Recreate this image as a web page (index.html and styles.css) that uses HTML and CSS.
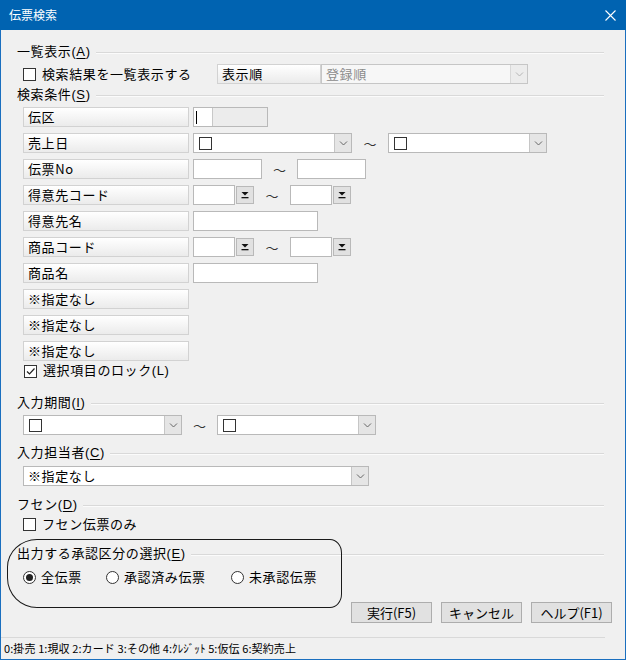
FILE: index.html
```html
<!DOCTYPE html>
<html lang="ja">
<head>
    <meta charset="UTF-8">
    <title>伝票検索</title>
    <link rel="stylesheet" href="styles.css">
</head>
<body>
    <div class="window">
        <div class="titlebar">
            <span class="title">伝票検索</span>
            <svg class="close" width="11" height="11" viewBox="0 0 11 11">
                <path d="M0.5 0.5 L10.5 10.5 M10.5 0.5 L0.5 10.5" stroke="#fff" stroke-width="1.1" fill="none"/>
            </svg>
        </div>

        <div class="content">
            <!-- 一覧表示 -->
            <div class="section-title">一覧表示(<u>A</u>)</div>
            <div class="row list-row">
                <label class="check"><span class="box"></span>検索結果を一覧表示する</label>
                <div class="field-label order-label">表示順</div>
                <div class="combo disabled order-combo">
                    <span class="combo-text">登録順</span>
                    <span class="combo-btn"><svg width="9" height="5" viewBox="0 0 9 5"><path d="M1 0.5 L4.5 4 L8 0.5" stroke="#b5b5b5" fill="none"/></svg></span>
                </div>
            </div>

            <!-- 検索条件 -->
            <div class="section-title cond-title">検索条件(<u>S</u>)</div>
            <div class="criteria">
                <div class="row">
                    <div class="field-label">伝区</div>
                    <div class="denku"><span class="denku-input"><span class="caret"></span></span><span class="denku-name"></span></div>
                </div>
                <div class="row">
                    <div class="field-label">売上日</div>
                    <div class="combo date-combo">
                        <span class="box inner"></span>
                        <span class="combo-text"></span>
                        <span class="combo-btn"><svg width="9" height="5" viewBox="0 0 9 5"><path d="M1 0.5 L4.5 4 L8 0.5" stroke="#666" fill="none"/></svg></span>
                    </div>
                    <span class="tilde">～</span>
                    <div class="combo date-combo">
                        <span class="box inner"></span>
                        <span class="combo-text"></span>
                        <span class="combo-btn"><svg width="9" height="5" viewBox="0 0 9 5"><path d="M1 0.5 L4.5 4 L8 0.5" stroke="#666" fill="none"/></svg></span>
                    </div>
                </div>
                <div class="row">
                    <div class="field-label">伝票No</div>
                    <div class="input no-input"></div>
                    <span class="tilde">～</span>
                    <div class="input no-input"></div>
                </div>
                <div class="row">
                    <div class="field-label">得意先コード</div>
                    <div class="input code-input"></div>
                    <span class="spin"><svg width="8" height="8" viewBox="0 0 8 8"><path d="M0.5 1 H7.5 L4 4.5 Z" fill="#111"/><rect x="0.5" y="6" width="7" height="1.3" fill="#111"/></svg></span>
                    <span class="tilde">～</span>
                    <div class="input code-input"></div>
                    <span class="spin"><svg width="8" height="8" viewBox="0 0 8 8"><path d="M0.5 1 H7.5 L4 4.5 Z" fill="#111"/><rect x="0.5" y="6" width="7" height="1.3" fill="#111"/></svg></span>
                </div>
                <div class="row">
                    <div class="field-label">得意先名</div>
                    <div class="input name-input"></div>
                </div>
                <div class="row">
                    <div class="field-label">商品コード</div>
                    <div class="input code-input"></div>
                    <span class="spin"><svg width="8" height="8" viewBox="0 0 8 8"><path d="M0.5 1 H7.5 L4 4.5 Z" fill="#111"/><rect x="0.5" y="6" width="7" height="1.3" fill="#111"/></svg></span>
                    <span class="tilde">～</span>
                    <div class="input code-input"></div>
                    <span class="spin"><svg width="8" height="8" viewBox="0 0 8 8"><path d="M0.5 1 H7.5 L4 4.5 Z" fill="#111"/><rect x="0.5" y="6" width="7" height="1.3" fill="#111"/></svg></span>
                </div>
                <div class="row">
                    <div class="field-label">商品名</div>
                    <div class="input name-input"></div>
                </div>
                <div class="row"><div class="field-label">※指定なし</div></div>
                <div class="row"><div class="field-label">※指定なし</div></div>
                <div class="row"><div class="field-label">※指定なし</div></div>
            </div>
            <label class="check lock-row"><span class="box checked"><svg width="11" height="11" viewBox="0 0 11 11"><path d="M2 5.5 L4.5 8 L9.5 2.5" stroke="#222" stroke-width="1.2" fill="none"/></svg></span>選択項目のロック(L)</label>

            <!-- 入力期間 -->
            <div class="section-title period-title">入力期間(<u>I</u>)</div>
            <div class="row period-row">
                <div class="combo period-combo">
                    <span class="box inner"></span>
                    <span class="combo-text"></span>
                    <span class="combo-btn"><svg width="9" height="5" viewBox="0 0 9 5"><path d="M1 0.5 L4.5 4 L8 0.5" stroke="#666" fill="none"/></svg></span>
                </div>
                <span class="tilde">～</span>
                <div class="combo period-combo">
                    <span class="box inner"></span>
                    <span class="combo-text"></span>
                    <span class="combo-btn"><svg width="9" height="5" viewBox="0 0 9 5"><path d="M1 0.5 L4.5 4 L8 0.5" stroke="#666" fill="none"/></svg></span>
                </div>
            </div>

            <!-- 入力担当者 -->
            <div class="section-title staff-title">入力担当者(<u>C</u>)</div>
            <div class="row staff-row">
                <div class="combo staff-combo">
                    <span class="combo-text">※指定なし</span>
                    <span class="combo-btn"><svg width="9" height="5" viewBox="0 0 9 5"><path d="M1 0.5 L4.5 4 L8 0.5" stroke="#666" fill="none"/></svg></span>
                </div>
            </div>

            <!-- フセン -->
            <div class="section-title fusen-title">フセン(<u>D</u>)</div>
            <label class="check fusen-row"><span class="box"></span>フセン伝票のみ</label>

            <!-- 承認区分 -->
            <div class="section-title approve-title">出力する承認区分の選択(<u>E</u>)</div>
            <div class="radios">
                <label class="radio"><span class="dot selected"></span>全伝票</label>
                <label class="radio"><span class="dot"></span>承認済み伝票</label>
                <label class="radio"><span class="dot"></span>未承認伝票</label>
            </div>

            <div class="actions">
                <button class="btn">実行(F5)</button>
                <button class="btn">キャンセル</button>
                <button class="btn">ヘルプ(F1)</button>
            </div>
        </div>

        <div class="statusbar">0:掛売 1:現収 2:カード 3:その他 4:ｸﾚｼﾞｯﾄ 5:仮伝 6:契約売上</div>

        <div class="annotation"></div>
    </div>
</body>
</html>
```

FILE: styles.css
```css
* {
    margin: 0;
    padding: 0;
    box-sizing: border-box;
}

body {
    background: #fff;
    font-family: "Noto Sans CJK JP", "Noto Sans", sans-serif;
    font-size: 13px;
    color: #000;
}

.window {
    position: relative;
    width: 626px;
    height: 660px;
    background: #f0f0f0;
    border: 1px solid #1a6fbf;
    border-top: none;
    display: flex;
    flex-direction: column;
}

.titlebar {
    height: 30px;
    background: #0063b1;
    display: flex;
    align-items: center;
    justify-content: space-between;
    padding: 0 10px 0 9px;
    margin: 0 -1px;
}

.title {
    color: #fff;
    font-size: 12px;
    line-height: 16px;
}

.close {
    display: block;
}

.content {
    flex: 1;
    padding: 13px 21px 0 16px;
}

/* group heading with etched line */
.section-title {
    display: flex;
    align-items: center;
    height: 18px;
    line-height: 18px;
    white-space: nowrap;
    letter-spacing: 0.6px;
    font-family: "Liberation Sans", "Noto Sans CJK JP", sans-serif;
}

.section-title::after {
    content: "";
    flex: 1;
    height: 1px;
    margin-left: 5px;
    background: #d9d9d9;
    box-shadow: 0 1px 0 #fbfbfb;
}

.section-title u {
    text-underline-offset: 2px;
}

.row {
    display: flex;
    align-items: center;
    height: 20px;
}

.list-row {
    margin: 3px 0 0 6px;
}

.cond-title { margin-top: 2px; }

.criteria {
    display: flex;
    flex-direction: column;
    gap: 6px;
    margin: 3px 0 0 6px;
}

/* checkbox and radio */
.check {
    display: flex;
    align-items: center;
    gap: 6px;
    height: 18px;
    line-height: 18px;
    letter-spacing: 0.6px;
}

.box {
    width: 13px;
    height: 13px;
    border: 1px solid #333;
    background: #fff;
    flex: none;
    display: flex;
    align-items: center;
    justify-content: center;
}

.list-row .check {
    width: 194px;
}

.lock-row {
    margin: 1px 0 0 7px;
    font-family: "Liberation Sans", "Noto Sans CJK JP", sans-serif;
}

.fusen-row {
    margin: 1px 0 0 6px;
}

.radios {
    display: flex;
    margin: 5px 0 0 6px;
    height: 18px;
}

.radio {
    display: flex;
    align-items: center;
    gap: 5px;
    line-height: 18px;
    letter-spacing: 0.6px;
}

.radio:nth-child(1) { width: 83px; }
.radio:nth-child(2) { width: 125px; }

.dot {
    width: 13px;
    height: 13px;
    border: 1px solid #333;
    border-radius: 50%;
    background: #fff;
    display: flex;
    align-items: center;
    justify-content: center;
}

.dot.selected::after {
    content: "";
    width: 7px;
    height: 7px;
    border-radius: 50%;
    background: #222;
}

/* labels and fields */
.field-label {
    width: 166px;
    height: 20px;
    margin-right: 4px;
    border: 1px solid #d2d2d2;
    background: linear-gradient(#ffffff, #f5f5f5 50%, #ebebeb);
    padding-left: 4px;
    line-height: 18px;
    letter-spacing: 0.6px;
}

.order-label {
    width: 104px;
    margin-right: 0;
}

.input {
    height: 20px;
    border: 1px solid #b9b9b9;
    background: #fff;
}

.no-input { width: 69px; }
.code-input { width: 42px; }
.name-input { width: 125px; }

.denku {
    display: flex;
    width: 75px;
    height: 20px;
    border: 1px solid #b9b9b9;
}

.denku-input {
    width: 19px;
    background: #fff;
    border-right: 1px solid #c8c8c8;
    padding: 3px 0 0 2px;
}

.caret {
    display: block;
    width: 1px;
    height: 13px;
    background: #000;
}

.denku-name {
    flex: 1;
    background: #ececec;
}

.spin {
    width: 18px;
    height: 18px;
    margin-left: 1px;
    border: 1px solid #b9b9b9;
    background: #e1e1e1;
    display: flex;
    align-items: center;
    justify-content: center;
}

.tilde {
    width: 36px;
    text-align: center;
    color: #333;
    font-size: 13px;
}

.no-input + .tilde { width: 35px; }

.combo {
    display: flex;
    align-items: center;
    height: 20px;
    border: 1px solid #b9b9b9;
    background: #fff;
}

.combo-text {
    flex: 1;
    padding-left: 4px;
    line-height: 18px;
    letter-spacing: 0.6px;
}

.combo-btn {
    width: 17px;
    height: 18px;
    background: #e5e5e5;
    border-left: 1px solid #c6c6c6;
    display: flex;
    align-items: center;
    justify-content: center;
}

.box.inner {
    margin-left: 5px;
}

.order-combo {
    width: 207px;
    background: #f7f7f7;
    border-color: #c6c6c6;
}

.order-combo .combo-text {
    color: #8c8c8c;
}

.order-combo .combo-btn {
    background: #ececec;
    border-left-color: #d8d8d8;
}

.date-combo { width: 159px; }

.period-title { margin-top: 14px; }

.period-row {
    margin: 3px 0 0 6px;
}

.period-combo { width: 159px; }
.period-row .tilde { width: 35px; }

.staff-title { margin-top: 9px; }

.staff-row {
    margin: 4px 0 0 6px;
}

.staff-combo { width: 346px; }

.fusen-title { margin-top: 10px; }

.approve-title { margin-top: 12px; }

.actions {
    display: flex;
    justify-content: flex-end;
    gap: 9px;
    margin: 16px -8px 0 0;
}

.btn {
    width: 81px;
    height: 21px;
    border: 1px solid #adadad;
    background: #e1e1e1;
    font-family: inherit;
    font-size: 13px;
    color: #000;
    line-height: 19px;
}

.statusbar {
    height: 22px;
    border-top: 1px solid #d9d9d9;
    margin-right: 20px;
    padding-left: 3px;
    font-size: 11px;
    line-height: 20px;
    letter-spacing: 0.1px;
    white-space: nowrap;
}

/* hand-drawn outline around the approval group */
.annotation {
    position: absolute;
    left: 6px;
    top: 539px;
    width: 335px;
    height: 69px;
    border: 1px solid #1a1a1a;
    border-radius: 30px 12px 12px 30px / 28px 14px 14px 30px;
    pointer-events: none;
}
```
